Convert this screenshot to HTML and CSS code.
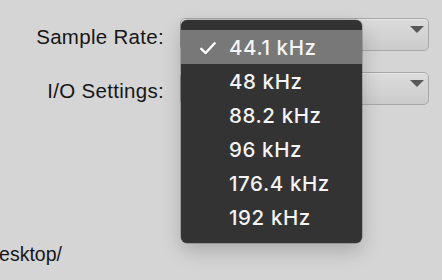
FILE: index.html
```html
<!DOCTYPE html>
<html>
<head>
<meta charset="utf-8">
<link rel="stylesheet" href="styles.css">
</head>
<body>
<div class="panel">
  <div class="form">
    <label class="label">Sample Rate:</label>
    <div class="select"><span class="arrow"></span></div>
    <label class="label">I/O Settings:</label>
    <div class="select"><span class="arrow"></span></div>
  </div>
  <div class="path">Desktop/</div>

  <ul class="menu">
    <li class="item selected">
      <svg class="check" width="16" height="13" viewBox="0 0 16 13"><polyline points="1.3,6.8 5.6,11 14.6,1.3" fill="none" stroke="#fff" stroke-width="2.4" stroke-linecap="round" stroke-linejoin="round"/></svg>
      <span>44.1 kHz</span>
    </li>
    <li class="item"><span>48 kHz</span></li>
    <li class="item"><span>88.2 kHz</span></li>
    <li class="item"><span>96 kHz</span></li>
    <li class="item"><span>176.4 kHz</span></li>
    <li class="item"><span>192 kHz</span></li>
  </ul>
</div>
</body>
</html>
```
FILE: styles.css
```css
html, body {
  margin: 0;
  padding: 0;
}
body {
  width: 442px;
  height: 280px;
  overflow: hidden;
  background: #d5d5d5;
  font-family: "Liberation Sans", Arial, sans-serif;
}
.panel {
  position: relative;
  height: 280px;
  padding-top: 18px;
  box-sizing: border-box;
}
.form {
  display: grid;
  grid-template-columns: 164px 249px;
  grid-template-rows: 33px 33px;
  column-gap: 16px;
  row-gap: 21px;
}
.label {
  text-align: right;
  font-size: 20.5px;
  letter-spacing: 0.3px;
  line-height: 37px;
  color: #161616;
  white-space: nowrap;
}
.select {
  position: relative;
  box-sizing: border-box;
  height: 33px;
  border: 1.5px solid #a8a8a8;
  border-radius: 5px;
  background: linear-gradient(#dcdcdc, #cbcbcb);
  box-shadow: inset 0 1px 0 #e6e6e6;
}
.arrow {
  position: absolute;
  right: 4px;
  top: 7px;
  width: 0;
  height: 0;
  border-left: 7px solid transparent;
  border-right: 7px solid transparent;
  border-top: 7px solid #585858;
}
.path {
  margin-top: 137px;
  margin-left: -15px;
  font-size: 19.5px;
  line-height: 24px;
  color: #161616;
}
.menu {
  position: absolute;
  left: 181px;
  top: 20px;
  width: 181px;
  height: 223px;
  box-sizing: border-box;
  margin: 0;
  padding: 10px 0 9px;
  list-style: none;
  background: #333333;
  border-radius: 6px;
  box-shadow: 0 8px 20px rgba(0, 0, 0, 0.2), 0 0 0 0.5px rgba(0, 0, 0, 0.35);
}
.item {
  position: relative;
  height: 34px;
  padding-left: 48px;
  display: flex;
  align-items: center;
  font-family: Inter, "Noto Sans", sans-serif;
  font-size: 20.5px;
  font-weight: 500;
  letter-spacing: 0.6px;
  color: #f4f4f4;
}
.selected {
  background: #787878;
}
.check {
  position: absolute;
  left: 19px;
  top: 12px;
}
```
